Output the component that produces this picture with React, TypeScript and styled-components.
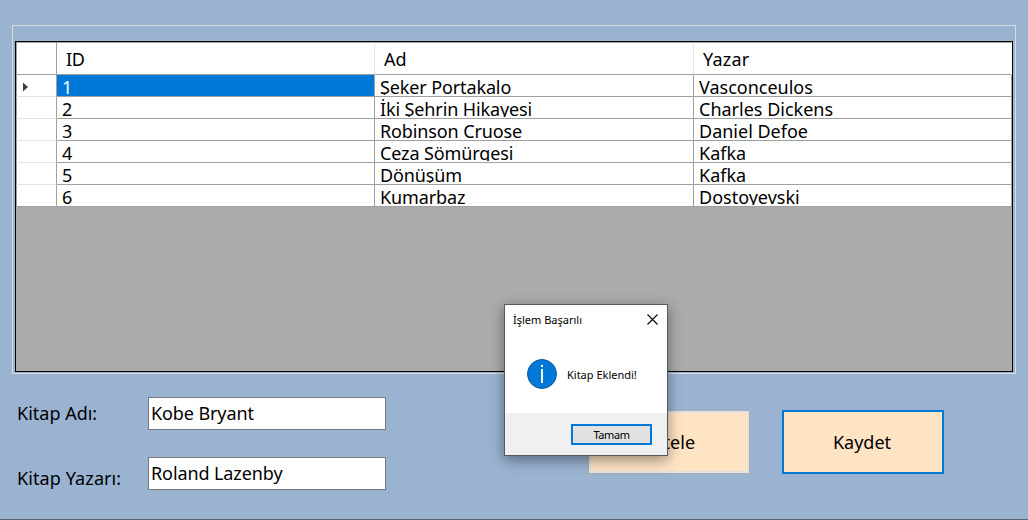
import React from "react";
import styled, { createGlobalStyle } from "styled-components";

const Global = createGlobalStyle`
  * { box-sizing: border-box; }
  html, body { margin: 0; padding: 0; overflow: hidden; }
  body { font-family: "Noto Sans", "Open Sans", sans-serif; color: #000; }
`;

const Form = styled.main`
  position: relative;
  width: 1028px;
  height: 520px;
  padding: 25px 12px 0;
  background: #99b3d1;
  border-bottom: 1px solid #5a6170;
  font-size: 18px;
`;

const GroupBox = styled.section`
  width: 1004px;
  height: 349px;
  padding: 15px 2px 1px;
  border: 1px solid #dcdcdc;
`;

const DataGrid = styled.div`
  width: 998px;
  height: 331px;
  border: 1px solid #000;
  background: #ababab;
`;

const Row = styled.div<{ $head?: boolean }>`
  display: grid;
  grid-template-columns: 41px 318px 319px 318px;
  height: ${(p) => (p.$head ? 33 : 22)}px;
`;

const HeadCell = styled.div<{ $line?: string; $spacing?: number }>`
  height: 33px;
  padding-left: 9px;
  line-height: 33px;
  letter-spacing: ${(p) => p.$spacing ?? 0}px;
  background: #fff;
  border-top: 1px solid #a0a0a0;
  border-bottom: 1px solid #a0a0a0;
  border-right: 1px solid ${(p) => p.$line ?? "#e5e5e5"};
`;

const CornerCell = styled(HeadCell)`
  border-left: 1px solid #a0a0a0;
`;

const RowHeader = styled.div<{ $last?: boolean }>`
  display: flex;
  align-items: center;
  padding: 2px 0 0 6px;
  background: #fff;
  border-left: 1px solid #a0a0a0;
  border-right: 1px solid #a0a0a0;
  border-bottom: 1px solid ${(p) => (p.$last ? "#a0a0a0" : "#e3e3e3")};
`;

const Cell = styled.div<{ $selected?: boolean }>`
  height: 22px;
  padding-left: 5px;
  color: ${(p) => (p.$selected ? "#fff" : "#000")};
  background: ${(p) => (p.$selected ? "#0078d7" : "#fff")};
  border-right: 1px solid #a0a0a0;
  border-bottom: 1px solid #a0a0a0;
`;

const CellText = styled.span<{ $spacing?: number }>`
  display: block;
  height: 20px;
  overflow: hidden;
  white-space: nowrap;
  line-height: 25px;
  letter-spacing: ${(p) => p.$spacing ?? 0}px;
`;

const Controls = styled.section`
  display: flex;
  align-items: flex-start;
  height: 145px;
`;

const Fields = styled.div`
  display: flex;
  flex-direction: column;
  gap: 27px;
  width: 576px;
  padding: 23px 0 0 5px;
`;

const Field = styled.label`
  display: grid;
  grid-template-columns: 131px 238px;
  height: 33px;
`;

const Caption = styled.span<{ $drop?: number; $spacing?: number }>`
  padding-top: ${(p) => p.$drop ?? 0}px;
  line-height: 33px;
  letter-spacing: ${(p) => p.$spacing ?? 0}px;
  white-space: nowrap;
`;

const TextBox = styled.input`
  width: 238px;
  height: 33px;
  margin: 0;
  padding: 0 2px 2px;
  border: 1px solid #7a7a7a;
  border-radius: 0;
  outline: none;
  background: #fff;
  color: #000;
  font: inherit;
  letter-spacing: -0.1px;
`;

const Actions = styled.div`
  display: flex;
  gap: 32px;
  padding-top: 36px;
`;

const ActionButton = styled.button<{ $focused?: boolean }>`
  width: 162px;
  height: 64px;
  padding: 0 2px 0 0;
  border: ${(p) => (p.$focused ? "2px solid #0078d7" : "1px solid #adadad")};
  box-shadow: ${(p) => (p.$focused ? "none" : "inset 0 0 0 2px #e1e1e1")};
  background: #ffe4c4;
  color: #000;
  font: inherit;
`;

const Dialog = styled.div`
  position: absolute;
  left: 504px;
  top: 304px;
  display: flex;
  flex-direction: column;
  width: 164px;
  height: 152px;
  border: 1px solid #555a60;
  background: #fff;
  box-shadow: 0 4px 13px rgba(0, 0, 0, 0.42);
  font-size: 11px;
`;

const TitleBar = styled.header`
  display: flex;
  justify-content: space-between;
  align-items: center;
  height: 29px;
  padding: 0 9px 0 8px;
`;

const Message = styled.div`
  display: flex;
  align-items: center;
  gap: 10px;
  height: 79px;
  padding-left: 22px;
  white-space: nowrap;
`;

const MessageText = styled.span`
  padding-top: 2px;
`;

const Footer = styled.footer`
  display: flex;
  flex: 1;
  justify-content: flex-end;
  padding: 11px 15px 0 0;
  background: #f0f0f0;
`;

const OkButton = styled.button`
  width: 81px;
  height: 21px;
  padding: 0;
  border: 2px solid #0078d7;
  background: #e1e1e1;
  color: #000;
  font: inherit;
  line-height: 17px;
  letter-spacing: -0.4px;
`;

const books = [
  ["1", "Şeker Portakalo", "Vasconceulos"],
  ["2", "İki Şehrin Hikayesi", "Charles Dickens"],
  ["3", "Robinson Cruose", "Daniel Defoe"],
  ["4", "Ceza Sömürgesi", "Kafka"],
  ["5", "Dönüşüm", "Kafka"],
  ["6", "Kumarbaz", "Dostoyevski"],
];

export default function App() {
  return (
    <>
      <Global />
      <Form>
        <GroupBox>
          <DataGrid>
            <Row $head>
              <CornerCell $line="#a0a0a0" />
              <HeadCell $spacing={-0.3}>ID</HeadCell>
              <HeadCell>Ad</HeadCell>
              <HeadCell $line="#fff" $spacing={0.2}>Yazar</HeadCell>
            </Row>
            {books.map(([id, name, author], i) => (
              <Row key={id}>
                <RowHeader $last={i === books.length - 1}>
                  {i === 0 && (
                    <svg width="5" height="10" viewBox="0 0 5 10">
                      <path d="M0 0.5L5 5L0 9.5Z" fill="#404040" />
                    </svg>
                  )}
                </RowHeader>
                <Cell $selected={i === 0}>
                  <CellText>{id}</CellText>
                </Cell>
                <Cell>
                  <CellText $spacing={-0.12}>{name}</CellText>
                </Cell>
                <Cell>
                  <CellText>{author}</CellText>
                </Cell>
              </Row>
            ))}
          </DataGrid>
        </GroupBox>
        <Controls>
          <Fields>
            <Field>
              <Caption>Kitap Adı:</Caption>
              <TextBox defaultValue="Kobe Bryant" />
            </Field>
            <Field>
              <Caption $drop={5} $spacing={0.1}>Kitap Yazarı:</Caption>
              <TextBox defaultValue="Roland Lazenby" />
            </Field>
          </Fields>
          <Actions>
            <ActionButton>Listele</ActionButton>
            <ActionButton $focused>Kaydet</ActionButton>
          </Actions>
        </Controls>
        <Dialog role="dialog">
          <TitleBar>
            <span>İşlem Başarılı</span>
            <svg width="11" height="11" viewBox="0 0 11 11">
              <path d="M0.5 0.5L10.5 10.5M10.5 0.5L0.5 10.5" stroke="#000" strokeWidth="1.1" />
            </svg>
          </TitleBar>
          <Message>
            <svg width="30" height="30" viewBox="0 0 30 30">
              <circle cx="15" cy="15" r="14.5" fill="#0078d7" stroke="#0a5a9c" />
              <path d="M14 6h2v2h-2zM14 10h2v14h-2z" fill="#fff" />
            </svg>
            <MessageText>Kitap Eklendi!</MessageText>
          </Message>
          <Footer>
            <OkButton>Tamam</OkButton>
          </Footer>
        </Dialog>
      </Form>
    </>
  );
}
